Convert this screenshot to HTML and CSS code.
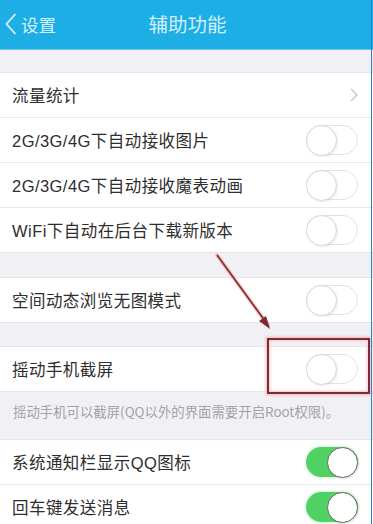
FILE: index.html
```html
<!DOCTYPE html>
<html lang="zh">
<head>
<meta charset="utf-8">
<title>辅助功能</title>
<link rel="stylesheet" href="styles.css">
</head>
<body>
<div class="screen">
  <header class="nav">
    <div class="back">
      <svg class="back-icon" width="12" height="22" viewBox="0 0 12 22"><path d="M10.5 1 L1.5 11 L10.5 21" fill="none" stroke="#d6f1fb" stroke-width="1.8"/></svg>
      <span>设置</span>
    </div>
    <div class="title">辅助功能</div>
  </header>

  <div class="gap first"></div>
  <section class="group">
    <div class="row"><span class="label">流量统计</span>
      <svg class="chev" width="8" height="14" viewBox="0 0 8 14"><path d="M1 1 L7 7 L1 13" fill="none" stroke="#c4c4c8" stroke-width="1.4"/></svg>
    </div>
    <div class="row"><span class="label">2G/3G/4G下自动接收图片</span><span class="switch"></span></div>
    <div class="row"><span class="label">2G/3G/4G下自动接收魔表动画</span><span class="switch"></span></div>
    <div class="row"><span class="label">WiFi下自动在后台下载新版本</span><span class="switch"></span></div>
  </section>

  <div class="gap"></div>
  <section class="group">
    <div class="row"><span class="label">空间动态浏览无图模式</span><span class="switch"></span></div>
  </section>

  <div class="gap short"></div>
  <section class="group">
    <div class="row"><span class="label">摇动手机截屏</span><span class="switch"></span></div>
  </section>
  <p class="note">摇动手机可以截屏(QQ以外的界面需要开启Root权限)。</p>

  <section class="group">
    <div class="row"><span class="label">系统通知栏显示QQ图标</span><span class="switch on"></span></div>
    <div class="row"><span class="label">回车键发送消息</span><span class="switch on"></span></div>
  </section>

  <svg class="arrow" width="80" height="90" viewBox="0 0 80 90">
    <line x1="2" y1="2" x2="53" y2="72" stroke="#f3a0a0" stroke-width="4" stroke-linecap="round" opacity="0.6"/>
    <line x1="2" y1="2" x2="53" y2="72" stroke="#7a2c30" stroke-width="1.6"/>
    <path d="M55 76 L44 68 L51 63 Z" fill="#7a2c30"/>
  </svg>
  <div class="highlight"></div>
  <div class="edge"></div>
</div>
</body>
</html>
```

FILE: styles.css
```css
* { box-sizing: border-box; }
html, body { margin: 0; padding: 0; }
body {
  width: 373px;
  height: 524px;
  overflow: hidden;
  background: #f1f1f5;
  font-family: "Liberation Sans", "Noto Sans CJK SC", sans-serif;
}
.screen {
  position: relative;
  width: 373px;
  height: 524px;
  overflow: hidden;
  background: #f1f1f5;
}
.nav {
  height: 50px;
  background: #1daee6;
  border-bottom: 1px solid #6fc6ea;
  display: flex;
  align-items: center;
  justify-content: center;
  position: relative;
  padding-bottom: 2px;
}
.back {
  position: absolute;
  left: 5px;
  top: 0;
  height: 48px;
  display: flex;
  align-items: center;
  gap: 4px;
  color: #d6f1fb;
  font-size: 17.5px;
  font-family: "Noto Sans CJK SC", sans-serif;
}
.title {
  color: #d3f0fb;
  font-size: 19.5px;
  font-family: "Noto Sans CJK SC", sans-serif;
  margin-left: 2px;
}
.gap { height: 24px; }
.gap.first { height: 22px; }
.gap.short { height: 23px; }
.group {
  background: #fff;
  border-top: 1px solid #e6e6ea;
  border-bottom: 1px solid #e6e6ea;
}
.row {
  height: 44px;
  display: flex;
  align-items: center;
  justify-content: space-between;
  padding: 0 15px 0 12px;
}
.row + .row {
  height: 45px;
  border-top: 1px solid #e8e8ec;
}
.label {
  font-size: 16.5px;
  letter-spacing: 0.45px;
  color: #2e2e2e;
}
.switch {
  position: relative;
  width: 52px;
  height: 30px;
  border-radius: 15px;
  border: 1.5px solid #e2e2e2;
  background: #fff;
}
.switch::after {
  content: "";
  position: absolute;
  left: -1px;
  top: -1px;
  width: 29px;
  height: 29px;
  border-radius: 50%;
  background: #fff;
  border: 1.5px solid #d8d8d8;
  box-shadow: 1px 1px 2px rgba(0,0,0,0.08);
}
.switch.on {
  background: #4fd163;
  border-color: #4fd163;
  box-shadow: 0 0 3px #9ce6a6;
}
.switch.on::after {
  left: auto;
  right: -1px;
  border-color: #6b6b6b;
}
.note {
  margin: 0;
  height: 47px;
  padding: 9px 0 0 13px;
  font-size: 13.4px;
  color: #a3a3a3;
  font-family: "Noto Sans CJK SC", sans-serif;
}
.arrow {
  position: absolute;
  left: 215px;
  top: 253px;
}
.highlight {
  position: absolute;
  left: 267px;
  top: 338px;
  width: 103px;
  height: 56px;
  border: 2px solid #7a2c30;
  box-shadow: 0 0 3px 1px #f4b0b0, inset 0 0 3px 1px #f8c8c8;
}
.edge {
  position: absolute;
  top: 0;
  right: 1px;
  width: 1.5px;
  height: 524px;
  background: #2e7ce0;
}
```
